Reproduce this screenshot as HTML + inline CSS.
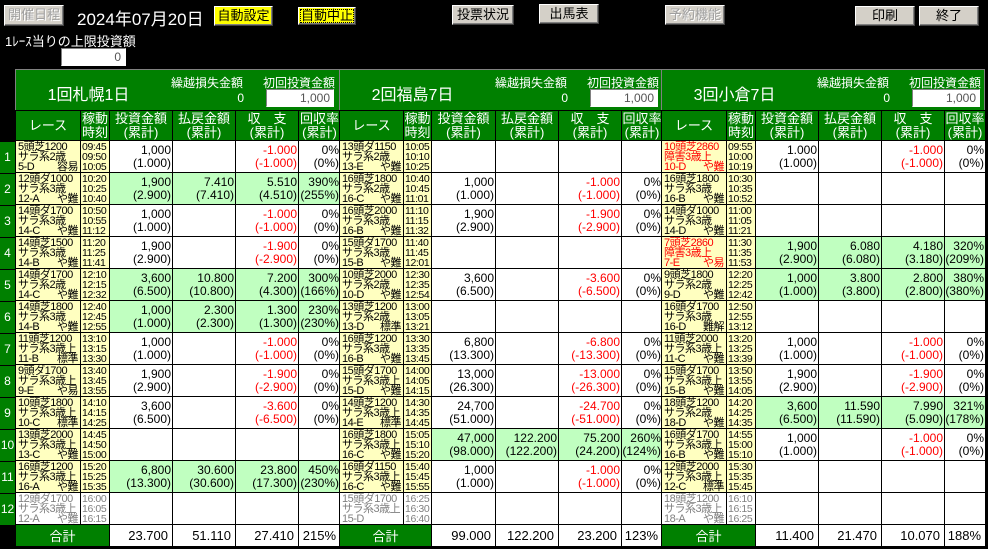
<!DOCTYPE html>
<html><head><meta charset="utf-8">
<style>
body{margin:0;background:#000;width:988px;height:549px;overflow:hidden;position:relative;font-family:"Liberation Sans","Noto Sans CJK JP",sans-serif}
.btn{position:absolute;background:#d4d0c8;border:1px solid;border-color:#fff #404040 #404040 #fff;box-shadow:inset -1px -1px #808080;font-size:13px;text-align:center;line-height:18px;color:#000;box-sizing:border-box}
.dis{color:#a0a0a0;text-shadow:1px 1px #fff}
.yel{background:#ffff00}
.panel{position:absolute;top:69px}
.hd{position:relative;height:41px;background:#008000;border:1px solid #808080;border-bottom:none;box-sizing:border-box;color:#fff;white-space:nowrap}
.hd .ti{position:absolute;left:0;width:145px;top:11px;text-align:center;font-size:16px}
.hd .k{position:absolute;left:155px;top:4px;font-size:12px}
.hd .z{position:absolute;left:150px;width:78px;top:21px;text-align:right;font-size:12px}
.hd .s{position:absolute;left:247px;top:4px;font-size:12px}
.hd .in{position:absolute;left:250px;top:19px;width:68px;height:18px;background:#fff;border:1px solid;border-color:#808080 #fff #fff #808080;box-sizing:border-box;color:#555;font-size:12px;text-align:right;padding-right:3px;line-height:16px}
table{border-collapse:collapse;table-layout:fixed}
td{border:1px solid #000;padding:0;font-size:12px;background:#fff;color:#000;overflow:hidden;white-space:nowrap}
tr.h td{background:#008000;color:#fff;font-size:13px;line-height:14px;text-align:center;height:29px}
tr.d td{height:31px}
td.r{background:#ffffc0;font-size:11px;line-height:10px;padding-left:2px;vertical-align:middle;letter-spacing:-0.5px}
td.r div{height:10px;line-height:10px;overflow:visible}
td.r div.l{display:flex;justify-content:space-between;align-items:baseline;padding-right:2px}
td.t{background:#ffffc0;font-size:10.5px;line-height:10px;padding-left:1px;letter-spacing:-0.4px}
td.n{text-align:right;line-height:13px;padding-right:1px;vertical-align:middle}
tr.g td.n{background:#c0ffc0}
.m{color:#f00}
tr.x td.r,tr.x td.t{background:#fff;color:#808080}
td.rr{color:#f00}
tr.tt td{height:21px;font-size:13px;text-align:right;padding-right:4px}
tr.tt td.gk{background:#008000;color:#fff;text-align:center;padding:0}
.rn{position:absolute;left:0;width:15px;height:31px;background:#008000;color:#fff;font-size:12px;text-align:center;line-height:31px}
</style></head><body>
<div class="btn dis" style="left:4px;top:5px;width:60px;height:21px">開催日程</div>
<div style="position:absolute;left:77px;top:5px;color:#fff;font-size:17px">2024年07月20日</div>
<div class="btn yel" style="left:214px;top:6px;width:59px;height:20px">自動設定</div>
<div class="btn yel" style="left:298px;top:7px;width:58px;height:18px;outline:1px dotted #000;outline-offset:-3px;line-height:16px">自動中止</div>
<div class="btn" style="left:452px;top:5px;width:62px;height:20px">投票状況</div>
<div class="btn" style="left:539px;top:4px;width:60px;height:20px">出馬表</div>
<div class="btn dis" style="left:665px;top:5px;width:60px;height:20px">予約機能</div>
<div class="btn" style="left:855px;top:6px;width:60px;height:20px">印刷</div>
<div class="btn" style="left:919px;top:6px;width:60px;height:20px">終了</div>
<div style="position:absolute;left:5px;top:31px;color:#fff;font-size:13px">1ﾚｰｽ当りの上限投資額</div>
<div style="position:absolute;left:61px;top:48px;width:65px;height:18px;background:#fff;border:1px solid;border-color:#808080 #fff #fff #808080;box-sizing:border-box;text-align:right;font-size:12px;color:#555;padding-right:4px;line-height:16px">0</div>

<div class="rn" style="top:142px">1</div><div class="rn" style="top:174px">2</div><div class="rn" style="top:206px">3</div><div class="rn" style="top:238px">4</div><div class="rn" style="top:270px">5</div><div class="rn" style="top:302px">6</div><div class="rn" style="top:334px">7</div><div class="rn" style="top:366px">8</div><div class="rn" style="top:398px">9</div><div class="rn" style="top:430px">10</div><div class="rn" style="top:462px">11</div><div class="rn" style="top:494px">12</div>

<!-- Panel 1 -->
<div class="panel" style="left:15px;width:325px">
<div class="hd"><div class="ti">1回札幌1日</div><div class="k">繰越損失金額</div><div class="z">0</div><div class="s">初回投資金額</div><div class="in">1,000</div></div>
<table style="width:325px"><colgroup><col style="width:65px"><col style="width:29px"><col style="width:63px"><col style="width:63px"><col style="width:63px"><col style="width:42px"></colgroup>
<tr class="h"><td>レース</td><td>稼動<br>時刻</td><td>投資金額<br>(累計)</td><td>払戻金額<br>(累計)</td><td>収　支<br>(累計)</td><td>回収率<br>(累計)</td></tr>
<tr class="d"><td class="r"><div>5頭芝1200</div><div>サラ系2歳</div><div class="l"><span>5-D</span><span>容易</span></div></td><td class="t">09:45<br>09:50<br>10:05</td><td class="n">1,000<br>(1.000)</td><td class="n"></td><td class="n m">-1.000<br>(-1.000)</td><td class="n">0%<br>(0%)</td></tr>
<tr class="d g"><td class="r"><div>12頭ダ1000</div><div>サラ系3歳</div><div class="l"><span>12-A</span><span>や難</span></div></td><td class="t">10:20<br>10:25<br>10:40</td><td class="n">1,900<br>(2.900)</td><td class="n">7.410<br>(7.410)</td><td class="n">5.510<br>(4.510)</td><td class="n">390%<br>(255%)</td></tr>
<tr class="d"><td class="r"><div>14頭ダ1700</div><div>サラ系3歳</div><div class="l"><span>14-C</span><span>や難</span></div></td><td class="t">10:50<br>10:55<br>11:12</td><td class="n">1,000<br>(1.000)</td><td class="n"></td><td class="n m">-1.000<br>(-1.000)</td><td class="n">0%<br>(0%)</td></tr>
<tr class="d"><td class="r"><div>14頭芝1500</div><div>サラ系3歳</div><div class="l"><span>14-B</span><span>や難</span></div></td><td class="t">11:20<br>11:25<br>11:41</td><td class="n">1,900<br>(2.900)</td><td class="n"></td><td class="n m">-1.900<br>(-2.900)</td><td class="n">0%<br>(0%)</td></tr>
<tr class="d g"><td class="r"><div>14頭ダ1700</div><div>サラ系2歳</div><div class="l"><span>14-C</span><span>や難</span></div></td><td class="t">12:10<br>12:15<br>12:32</td><td class="n">3,600<br>(6.500)</td><td class="n">10.800<br>(10.800)</td><td class="n">7.200<br>(4.300)</td><td class="n">300%<br>(166%)</td></tr>
<tr class="d g"><td class="r"><div>14頭芝1800</div><div>サラ系3歳</div><div class="l"><span>14-B</span><span>や難</span></div></td><td class="t">12:40<br>12:45<br>12:55</td><td class="n">1,000<br>(1.000)</td><td class="n">2.300<br>(2.300)</td><td class="n">1.300<br>(1.300)</td><td class="n">230%<br>(230%)</td></tr>
<tr class="d"><td class="r"><div>11頭芝1200</div><div>サラ系3歳上</div><div class="l"><span>11-B</span><span>標準</span></div></td><td class="t">13:10<br>13:15<br>13:30</td><td class="n">1,000<br>(1.000)</td><td class="n"></td><td class="n m">-1.000<br>(-1.000)</td><td class="n">0%<br>(0%)</td></tr>
<tr class="d"><td class="r"><div>9頭ダ1700</div><div>サラ系3歳上</div><div class="l"><span>9-E</span><span>や易</span></div></td><td class="t">13:40<br>13:45<br>13:55</td><td class="n">1,900<br>(2.900)</td><td class="n"></td><td class="n m">-1.900<br>(-2.900)</td><td class="n">0%<br>(0%)</td></tr>
<tr class="d"><td class="r"><div>10頭芝1800</div><div>サラ系3歳上</div><div class="l"><span>10-C</span><span>標準</span></div></td><td class="t">14:10<br>14:15<br>14:25</td><td class="n">3,600<br>(6.500)</td><td class="n"></td><td class="n m">-3.600<br>(-6.500)</td><td class="n">0%<br>(0%)</td></tr>
<tr class="d"><td class="r"><div>13頭芝2000</div><div>サラ系3歳上</div><div class="l"><span>13-C</span><span>や難</span></div></td><td class="t">14:45<br>14:50<br>15:00</td><td class="n"></td><td class="n"></td><td class="n"></td><td class="n"></td></tr>
<tr class="d g"><td class="r"><div>16頭芝1200</div><div>サラ系3歳上</div><div class="l"><span>16-A</span><span>や難</span></div></td><td class="t">15:20<br>15:25<br>15:35</td><td class="n">6,800<br>(13.300)</td><td class="n">30.600<br>(30.600)</td><td class="n">23.800<br>(17.300)</td><td class="n">450%<br>(230%)</td></tr>
<tr class="d x"><td class="r"><div>12頭ダ1700</div><div>サラ系3歳上</div><div class="l"><span>12-A</span><span>や難</span></div></td><td class="t">16:00<br>16:05<br>16:15</td><td class="n"></td><td class="n"></td><td class="n"></td><td class="n"></td></tr>
<tr class="tt"><td class="gk" colspan="2">合計</td><td>23.700</td><td>51.110</td><td>27.410</td><td>215%</td></tr>
</table></div>

<!-- Panel 2 -->
<div class="panel" style="left:339px;width:323px">
<div class="hd"><div class="ti">2回福島7日</div><div class="k">繰越損失金額</div><div class="z">0</div><div class="s">初回投資金額</div><div class="in">1,000</div></div>
<table style="width:323px"><colgroup><col style="width:64px"><col style="width:28px"><col style="width:64px"><col style="width:63px"><col style="width:63px"><col style="width:41px"></colgroup>
<tr class="h"><td>レース</td><td>稼動<br>時刻</td><td>投資金額<br>(累計)</td><td>払戻金額<br>(累計)</td><td>収　支<br>(累計)</td><td>回収率<br>(累計)</td></tr>
<tr class="d"><td class="r"><div>13頭ダ1150</div><div>サラ系2歳</div><div class="l"><span>13-E</span><span>や難</span></div></td><td class="t">10:05<br>10:10<br>10:25</td><td class="n"></td><td class="n"></td><td class="n"></td><td class="n"></td></tr>
<tr class="d"><td class="r"><div>16頭芝1800</div><div>サラ系2歳</div><div class="l"><span>16-C</span><span>や難</span></div></td><td class="t">10:40<br>10:45<br>11:01</td><td class="n">1,000<br>(1.000)</td><td class="n"></td><td class="n m">-1.000<br>(-1.000)</td><td class="n">0%<br>(0%)</td></tr>
<tr class="d"><td class="r"><div>16頭芝2000</div><div>サラ系3歳</div><div class="l"><span>16-B</span><span>や難</span></div></td><td class="t">11:10<br>11:15<br>11:32</td><td class="n">1,900<br>(2.900)</td><td class="n"></td><td class="n m">-1.900<br>(-2.900)</td><td class="n">0%<br>(0%)</td></tr>
<tr class="d"><td class="r"><div>15頭ダ1700</div><div>サラ系3歳</div><div class="l"><span>15-B</span><span>や難</span></div></td><td class="t">11:40<br>11:45<br>12:01</td><td class="n"></td><td class="n"></td><td class="n"></td><td class="n"></td></tr>
<tr class="d"><td class="r"><div>10頭芝2000</div><div>サラ系2歳</div><div class="l"><span>10-D</span><span>や難</span></div></td><td class="t">12:30<br>12:35<br>12:54</td><td class="n">3,600<br>(6.500)</td><td class="n"></td><td class="n m">-3.600<br>(-6.500)</td><td class="n">0%<br>(0%)</td></tr>
<tr class="d"><td class="r"><div>13頭芝1200</div><div>サラ系2歳</div><div class="l"><span>13-D</span><span>標準</span></div></td><td class="t">13:00<br>13:05<br>13:21</td><td class="n"></td><td class="n"></td><td class="n"></td><td class="n"></td></tr>
<tr class="d"><td class="r"><div>16頭芝1200</div><div>サラ系3歳</div><div class="l"><span>16-B</span><span>や難</span></div></td><td class="t">13:30<br>13:35<br>13:45</td><td class="n">6,800<br>(13.300)</td><td class="n"></td><td class="n m">-6.800<br>(-13.300)</td><td class="n">0%<br>(0%)</td></tr>
<tr class="d"><td class="r"><div>15頭ダ1700</div><div>サラ系3歳上</div><div class="l"><span>15-D</span><span>や難</span></div></td><td class="t">14:00<br>14:05<br>14:15</td><td class="n">13,000<br>(26.300)</td><td class="n"></td><td class="n m">-13.000<br>(-26.300)</td><td class="n">0%<br>(0%)</td></tr>
<tr class="d"><td class="r"><div>14頭芝1200</div><div>サラ系3歳上</div><div class="l"><span>14-E</span><span>標準</span></div></td><td class="t">14:30<br>14:35<br>14:45</td><td class="n">24,700<br>(51.000)</td><td class="n"></td><td class="n m">-24.700<br>(-51.000)</td><td class="n">0%<br>(0%)</td></tr>
<tr class="d g"><td class="r"><div>16頭芝1800</div><div>サラ系3歳上</div><div class="l"><span>16-C</span><span>や難</span></div></td><td class="t">15:05<br>15:10<br>15:20</td><td class="n">47,000<br>(98.000)</td><td class="n">122.200<br>(122.200)</td><td class="n">75.200<br>(24.200)</td><td class="n">260%<br>(124%)</td></tr>
<tr class="d"><td class="r"><div>16頭ダ1150</div><div>サラ系3歳上</div><div class="l"><span>16-C</span><span>や難</span></div></td><td class="t">15:40<br>15:45<br>15:55</td><td class="n">1,000<br>(1.000)</td><td class="n"></td><td class="n m">-1.000<br>(-1.000)</td><td class="n">0%<br>(0%)</td></tr>
<tr class="d x"><td class="r"><div>15頭ダ1700</div><div>サラ系3歳上</div><div class="l"><span>15-D</span><span></span></div></td><td class="t">16:25<br>16:30<br>16:40</td><td class="n"></td><td class="n"></td><td class="n"></td><td class="n"></td></tr>
<tr class="tt"><td class="gk" colspan="2">合計</td><td>99.000</td><td>122.200</td><td>23.200</td><td>123%</td></tr>
</table></div>

<!-- Panel 3 -->
<div class="panel" style="left:661px;width:324px">
<div class="hd"><div class="ti">3回小倉7日</div><div class="k">繰越損失金額</div><div class="z">0</div><div class="s">初回投資金額</div><div class="in">1,000</div></div>
<table style="width:324px"><colgroup><col style="width:65px"><col style="width:29px"><col style="width:63px"><col style="width:63px"><col style="width:63px"><col style="width:41px"></colgroup>
<tr class="h"><td>レース</td><td>稼動<br>時刻</td><td>投資金額<br>(累計)</td><td>払戻金額<br>(累計)</td><td>収　支<br>(累計)</td><td>回収率<br>(累計)</td></tr>
<tr class="d"><td class="r rr"><div>10頭芝2860</div><div>障害3歳上</div><div class="l"><span>10-D</span><span>や難</span></div></td><td class="t">09:55<br>10:00<br>10:19</td><td class="n">1.000<br>(1.000)</td><td class="n"></td><td class="n m">-1.000<br>(-1.000)</td><td class="n">0%<br>(0%)</td></tr>
<tr class="d"><td class="r"><div>16頭芝1800</div><div>サラ系3歳</div><div class="l"><span>16-B</span><span>や難</span></div></td><td class="t">10:30<br>10:35<br>10:52</td><td class="n"></td><td class="n"></td><td class="n"></td><td class="n"></td></tr>
<tr class="d"><td class="r"><div>14頭ダ1000</div><div>サラ系3歳</div><div class="l"><span>14-D</span><span>や難</span></div></td><td class="t">11:00<br>11:05<br>11:21</td><td class="n"></td><td class="n"></td><td class="n"></td><td class="n"></td></tr>
<tr class="d g"><td class="r rr"><div>7頭芝2860</div><div>障害3歳上</div><div class="l"><span>7-E</span><span>や易</span></div></td><td class="t">11:30<br>11:35<br>11:53</td><td class="n">1,900<br>(2.900)</td><td class="n">6.080<br>(6.080)</td><td class="n">4.180<br>(3.180)</td><td class="n">320%<br>(209%)</td></tr>
<tr class="d g"><td class="r"><div>9頭芝1800</div><div>サラ系2歳</div><div class="l"><span>9-D</span><span>や難</span></div></td><td class="t">12:20<br>12:25<br>12:42</td><td class="n">1,000<br>(1.000)</td><td class="n">3.800<br>(3.800)</td><td class="n">2.800<br>(2.800)</td><td class="n">380%<br>(380%)</td></tr>
<tr class="d"><td class="r"><div>16頭ダ1700</div><div>サラ系3歳</div><div class="l"><span>16-D</span><span>難解</span></div></td><td class="t">12:50<br>12:55<br>13:12</td><td class="n"></td><td class="n"></td><td class="n"></td><td class="n"></td></tr>
<tr class="d"><td class="r"><div>11頭芝2000</div><div>サラ系3歳上</div><div class="l"><span>11-C</span><span>や難</span></div></td><td class="t">13:20<br>13:25<br>13:39</td><td class="n">1,000<br>(1.000)</td><td class="n"></td><td class="n m">-1.000<br>(-1.000)</td><td class="n">0%<br>(0%)</td></tr>
<tr class="d"><td class="r"><div>15頭ダ1700</div><div>サラ系3歳上</div><div class="l"><span>15-B</span><span>や難</span></div></td><td class="t">13:50<br>13:55<br>14:05</td><td class="n">1,900<br>(2.900)</td><td class="n"></td><td class="n m">-1.900<br>(-2.900)</td><td class="n">0%<br>(0%)</td></tr>
<tr class="d g"><td class="r"><div>18頭芝1200</div><div>サラ系2歳</div><div class="l"><span>18-D</span><span>や難</span></div></td><td class="t">14:20<br>14:25<br>14:35</td><td class="n">3,600<br>(6.500)</td><td class="n">11.590<br>(11.590)</td><td class="n">7.990<br>(5.090)</td><td class="n">321%<br>(178%)</td></tr>
<tr class="d"><td class="r"><div>16頭ダ1700</div><div>サラ系3歳上</div><div class="l"><span>16-B</span><span>や難</span></div></td><td class="t">14:55<br>15:00<br>15:10</td><td class="n">1,000<br>(1.000)</td><td class="n"></td><td class="n m">-1.000<br>(-1.000)</td><td class="n">0%<br>(0%)</td></tr>
<tr class="d"><td class="r"><div>12頭芝2000</div><div>サラ系3歳上</div><div class="l"><span>12-C</span><span>標準</span></div></td><td class="t">15:30<br>15:35<br>15:45</td><td class="n"></td><td class="n"></td><td class="n"></td><td class="n"></td></tr>
<tr class="d x"><td class="r"><div>18頭芝1200</div><div>サラ系3歳上</div><div class="l"><span>18-A</span><span>や難</span></div></td><td class="t">16:10<br>16:15<br>16:25</td><td class="n"></td><td class="n"></td><td class="n"></td><td class="n"></td></tr>
<tr class="tt"><td class="gk" colspan="2">合計</td><td>11.400</td><td>21.470</td><td>10.070</td><td>188%</td></tr>
</table></div>
</body></html>
